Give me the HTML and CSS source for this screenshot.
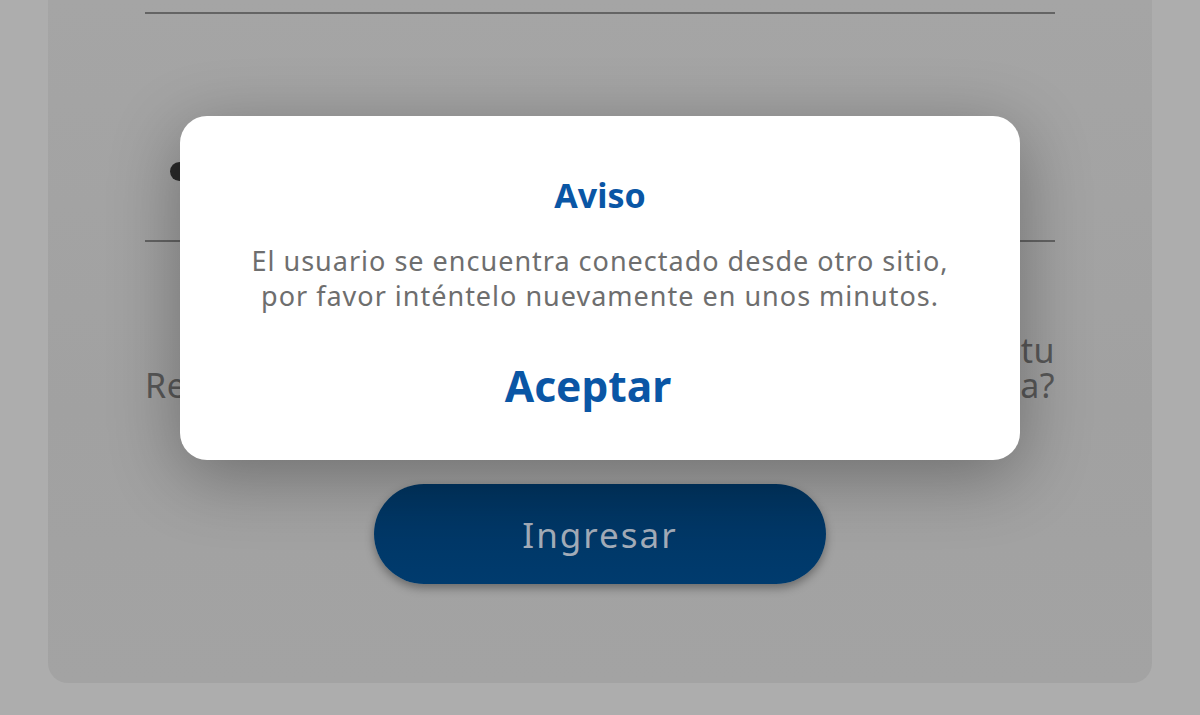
FILE: index.html
```html
<!DOCTYPE html>
<html lang="es">
<head>
    <meta charset="UTF-8">
    <meta name="viewport" content="width=device-width, initial-scale=1.0">
    <title>Ingreso</title>
    <link rel="stylesheet" href="styles.css">
</head>
<body>
    <div class="login-card">
        <div class="field field-user"></div>

        <div class="field field-pass">
            <span class="dot"></span>
        </div>

        <div class="links">
            <span class="remember">Recordar usuario</span>
            <span class="forgot">¿Olvidaste tu<br>contraseña?</span>
        </div>

        <button type="button" class="btn-login">Ingresar</button>
    </div>

    <div class="overlay">
        <div class="dialog">
            <h2 class="dialog-title">Aviso</h2>
            <p class="dialog-text">El usuario se encuentra conectado desde otro sitio,<br>por favor inténtelo nuevamente en unos minutos.</p>
            <button type="button" class="dialog-btn">Aceptar</button>
        </div>
    </div>
</body>
</html>
```

FILE: styles.css
```css
body {
    margin: 0;
    padding: 0;
    height: 715px;
    overflow: hidden;
    background: #adadad;
    font-family: "Noto Sans", "Open Sans", sans-serif;
}

.login-card {
    margin-left: 48px;
    width: 1104px;
    height: 683px;
    box-sizing: border-box;
    padding: 0 97px;
    background: linear-gradient(180deg, #a5a5a5 0%, #a1a1a1 60%, #a3a3a3 100%);
    border-radius: 0 0 20px 20px;
    display: flex;
    flex-direction: column;
}

.field {
    border-bottom: 2px solid #646464;
}

.field-user {
    height: 12px;
}

.field-pass {
    height: 228px;
    box-sizing: border-box;
    padding: 0 0 59px 25px;
    display: flex;
    align-items: flex-end;
}

.dot {
    width: 19px;
    height: 19px;
    border-radius: 50%;
    background: #2a2a2a;
}

.links {
    margin-top: 91px;
    display: flex;
    justify-content: space-between;
    align-items: flex-end;
    font-size: 34px;
    line-height: 35px;
    color: #585858;
    letter-spacing: 0.5px;
}

.forgot {
    text-align: right;
}

.btn-login {
    margin: 81px auto 0;
    width: 452px;
    height: 100px;
    border: none;
    border-radius: 50px;
    background: linear-gradient(180deg, #003460 0%, #003b6e 100%);
    color: #a3acb8;
    font-family: "Noto Sans", sans-serif;
    font-size: 35px;
    letter-spacing: 2px;
    box-shadow: 0 4px 10px rgba(0, 0, 0, 0.35);
}

.overlay {
    position: absolute;
    top: 0;
    left: 0;
    width: 1200px;
    height: 715px;
}

.dialog {
    position: absolute;
    left: 180px;
    top: 116px;
    width: 840px;
    height: 344px;
    background: #ffffff;
    border-radius: 27px;
    box-shadow: 0 16px 70px rgba(0, 0, 0, 0.32);
    display: flex;
    flex-direction: column;
    align-items: center;
    text-align: center;
}

.dialog-title {
    margin: 57px 0 0;
    font-size: 34px;
    line-height: 44px;
    font-weight: bold;
    color: #0a56a5;
}

.dialog-text {
    margin: 26px 0 0;
    font-size: 27px;
    line-height: 35px;
    letter-spacing: 1px;
    color: #6e6e6e;
}

.dialog-btn {
    margin: 47px 24px 0 0;
    padding: 0;
    border: none;
    background: none;
    font-family: "Noto Sans", sans-serif;
    font-size: 42.5px;
    line-height: 52px;
    font-weight: bold;
    color: #0a56a5;
}
```
